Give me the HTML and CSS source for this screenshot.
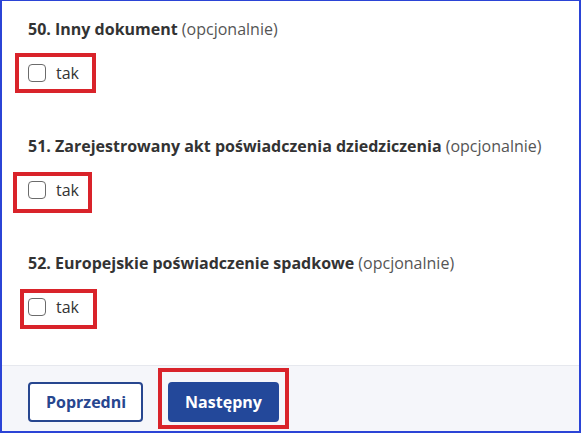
FILE: index.html
```html
<!DOCTYPE html>
<html lang="pl">
<head>
<meta charset="utf-8">
<title>Formularz</title>
<link rel="stylesheet" href="styles.css">
</head>
<body>
<div class="frame">
  <main class="form">
    <section class="field">
      <p class="question"><strong>50. Inny dokument</strong> (opcjonalnie)</p>
      <label class="option">
        <span class="box"></span><span class="text">tak</span>
        <span class="mark mark-1"></span>
      </label>
    </section>
    <section class="field">
      <p class="question"><strong>51. Zarejestrowany akt poświadczenia dziedziczenia</strong> (opcjonalnie)</p>
      <label class="option">
        <span class="box"></span><span class="text">tak</span>
        <span class="mark mark-2"></span>
      </label>
    </section>
    <section class="field">
      <p class="question"><strong>52. Europejskie poświadczenie spadkowe</strong> (opcjonalnie)</p>
      <label class="option">
        <span class="box"></span><span class="text">tak</span>
        <span class="mark mark-3"></span>
      </label>
    </section>
  </main>
  <footer class="actions">
    <button class="btn btn-secondary" type="button">Poprzedni</button>
    <span class="next-wrap">
      <button class="btn btn-primary" type="button">Następny</button>
      <span class="mark mark-btn"></span>
    </span>
  </footer>
</div>
</body>
</html>
```
FILE: styles.css
```css
* { box-sizing: border-box; }
html, body { margin: 0; padding: 0; background: #fff; }
body {
  font-family: "Open Sans", "Noto Sans", sans-serif;
  font-size: 16px;
  line-height: 24px;
  color: #333;
}
.frame {
  width: 581px;
  height: 433px;
  border: 2px solid #2b44d6;
  border-top-width: 1px;
  display: flex;
  flex-direction: column;
  overflow: hidden;
}
.form {
  flex: 1;
  padding: 16px 26px 0;
  display: flex;
  flex-direction: column;
  gap: 49px;
}
.field { display: flex; flex-direction: column; gap: 20px; }
.question {
  margin: 0;
  color: #555;
  white-space: nowrap;
}
.question strong { color: #333; font-weight: 700; }
.option {
  position: relative;
  display: flex;
  align-items: center;
  gap: 10px;
  height: 24px;
  align-self: flex-start;
}
.box {
  width: 18px;
  height: 18px;
  border: 1.5px solid #6b6b6b;
  border-radius: 4px;
  background: #fff;
}
.text { color: #333; }
.mark {
  position: absolute;
  border: 4px solid #d9232a;
  pointer-events: none;
}
.mark-1 { left: -13px; top: -8px; width: 81px; height: 40px; }
.mark-2 { left: -15px; top: -6px; width: 79px; height: 41px; }
.mark-3 { left: -8px; top: -6px; width: 77px; height: 40px; }
.actions {
  height: 66px;
  flex-shrink: 0;
  background: #f5f6fa;
  border-top: 1px solid #e6e8ee;
  display: flex;
  align-items: flex-start;
  gap: 25px;
  padding: 16px 26px 0;
}
.next-wrap { position: relative; display: flex; }
.btn {
  height: 40px;
  border-radius: 4px;
  font-family: "Open Sans", "Noto Sans", sans-serif;
  font-size: 16px;
  font-weight: 700;
  padding: 0 16px;
  cursor: pointer;
}
.btn-secondary {
  width: 115px;
  background: #fff;
  color: #27468f;
  border: 2px solid #27468f;
}
.btn-primary {
  width: 111px;
  background: #23489a;
  color: #fff;
  border: 0;
}
.mark-btn { left: -10px; top: -14px; width: 131px; height: 61px; }
```
